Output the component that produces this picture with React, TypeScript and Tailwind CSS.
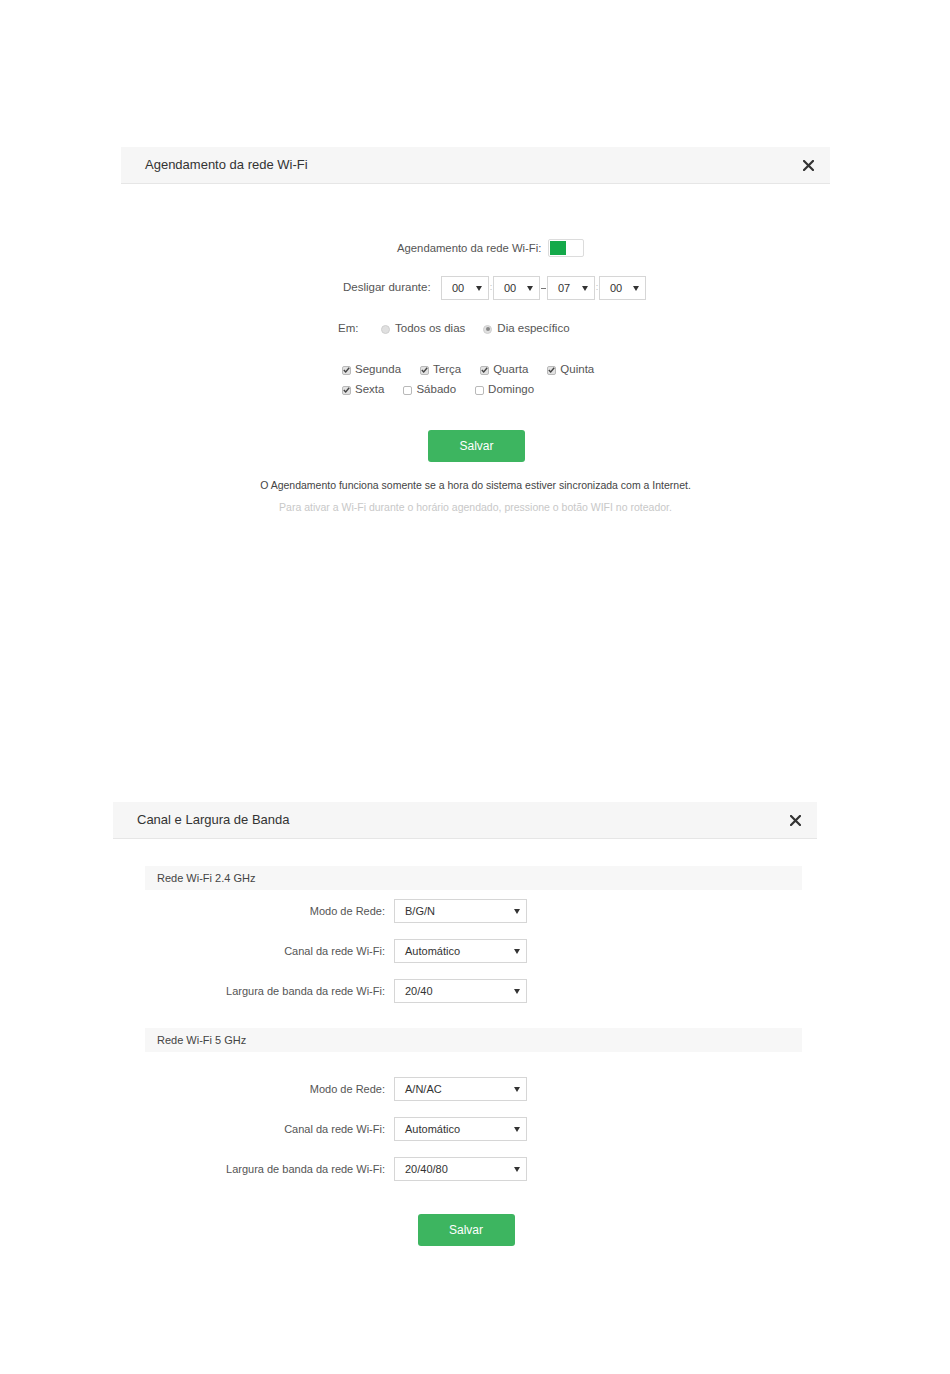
import React from 'react';

const font = 'font-["Liberation_Sans",Arial,sans-serif]';

const CloseIcon = () => (
    <svg width="11" height="11" viewBox="0 0 11 11" className="text-[#333]">
        <path d="M1 1 L10 10 M10 1 L1 10" stroke="currentColor" strokeWidth="2.2" strokeLinecap="square" />
    </svg>
);

const Caret = () => (
    <svg width="6" height="5" viewBox="0 0 6 5" className="text-[#333]">
        <path d="M0 0 L6 0 L3 5 Z" fill="currentColor" />
    </svg>
);

// Dialog title bar with the close cross on the right
const DialogHeader: React.FC<{ title: string }> = ({ title }) => (
    <div className="flex items-center justify-between h-[37px] bg-[#f6f6f6] border-b border-[#e6e6e6] pl-[24px] pr-[16px]">
        <span className="text-[13px] text-[#333]">{title}</span>
        <CloseIcon />
    </div>
);

const FakeSelect: React.FC<{ value: string; width: string }> = ({ value, width }) => (
    <div className={`flex items-center justify-between h-[24px] border border-[#d6d6d6] bg-white ${width} pl-[10px] pr-[6px]`}>
        <span className="text-[11px] text-[#333]">{value}</span>
        <Caret />
    </div>
);

const Radio: React.FC<{ checked?: boolean; label: string }> = ({ checked, label }) => (
    <div className="flex items-center">
        <span className="w-[9px] h-[9px] rounded-full bg-[#e0e0e0] border border-[#cfcfcf] flex items-center justify-center mr-[5px]">
            {checked && <span className="w-[4px] h-[4px] rounded-full bg-[#888]" />}
        </span>
        <span className="text-[11.5px] text-[#555]">{label}</span>
    </div>
);

const Check: React.FC<{ checked?: boolean; label: string }> = ({ checked, label }) => (
    <div className="flex items-center mr-[19px]">
        <span className={`w-[9px] h-[9px] rounded-[2px] border border-[#b9b9b9] flex items-center justify-center mr-[4px] ${checked ? 'bg-[#e2e2e2]' : 'bg-white'}`}>
            {checked && (
                <svg width="7" height="6" viewBox="0 0 7 6">
                    <path d="M0.8 3 L2.7 4.9 L6.2 0.8" stroke="#444" strokeWidth="1.4" fill="none" />
                </svg>
            )}
        </span>
        <span className="text-[11.5px] text-[#555]">{label}</span>
    </div>
);

const SaveButton = () => (
    <div className="w-[97px] h-[32px] rounded-[3px] bg-[#3db560] flex items-center justify-center text-white text-[12px]">
        Salvar
    </div>
);

const FormRow: React.FC<{ label: string; value: string }> = ({ label, value }) => (
    <div className="flex items-center h-[24px]">
        <span className="w-[249px] text-right text-[11px] text-[#555] pr-[9px]">{label}</span>
        <FakeSelect value={value} width="w-[133px]" />
    </div>
);

const SectionTitle: React.FC<{ title: string }> = ({ title }) => (
    <div className="h-[24px] bg-[#f7f7f7] flex items-center pl-[12px] mr-[15px] text-[11px] text-[#444]">{title}</div>
);

export default function App() {
    return (
        <div className={`w-[950px] h-[1374px] bg-white ${font}`}>
            {/* Wi-Fi schedule dialog */}
            <div className="h-[802px] pt-[147px]">
                <div className="ml-[121px] w-[709px]">
                    <DialogHeader title="Agendamento da rede Wi-Fi" />

                    <div className="pt-[55px] flex flex-col">
                        <div className="flex items-center pl-[276px] h-[18px]">
                            <span className="text-[11.3px] text-[#555] mr-[7px]">Agendamento da rede Wi-Fi:</span>
                            <div className="w-[36px] h-[18px] border border-[#dcdcdc] rounded-[2px] flex p-[1px]">
                                <div className="w-[16px] h-full bg-[#14a94a]" />
                            </div>
                        </div>

                        <div className="flex items-center pl-[222px] mt-[19px]">
                            <span className="w-[98px] text-[11.5px] text-[#555]">Desligar durante:</span>
                            <FakeSelect value="00" width="w-[48px]" />
                            <span className="w-[4px] text-center text-[9px] text-[#bbb]">:</span>
                            <FakeSelect value="00" width="w-[47px]" />
                            <span className="w-[7px] flex justify-center"><span className="w-[5px] h-[1px] bg-[#777]" /></span>
                            <FakeSelect value="07" width="w-[48px]" />
                            <span className="w-[4px] text-center text-[9px] text-[#bbb]">:</span>
                            <FakeSelect value="00" width="w-[47px]" />
                        </div>

                        <div className="flex items-center pl-[217px] mt-[21px] h-[16px]">
                            <span className="w-[43px] text-[11.5px] text-[#555]">Em:</span>
                            <Radio label="Todos os dias" />
                            <span className="w-[18px]" />
                            <Radio checked label="Dia específico" />
                        </div>

                        <div className="flex items-center pl-[221px] mt-[26px] h-[14px]">
                            <Check checked label="Segunda" />
                            <Check checked label="Terça" />
                            <Check checked label="Quarta" />
                            <Check checked label="Quinta" />
                        </div>
                        <div className="flex items-center pl-[221px] mt-[6px] h-[14px]">
                            <Check checked label="Sexta" />
                            <Check label="Sábado" />
                            <Check label="Domingo" />
                        </div>

                        <div className="flex justify-center mt-[33px] pl-[2px]">
                            <SaveButton />
                        </div>

                        <p className="text-center text-[10.5px] leading-[14px] text-[#444] mt-[16px]">
                            O Agendamento funciona somente se a hora do sistema estiver sincronizada com a Internet.
                        </p>
                        <p className="text-center text-[10.5px] leading-[14px] text-[#c8c8c8] mt-[8px]">
                            Para ativar a Wi-Fi durante o horário agendado, pressione o botão WIFI no roteador.
                        </p>
                    </div>
                </div>
            </div>

            {/* Channel and bandwidth dialog */}
            <div className="ml-[113px] w-[704px]">
                <DialogHeader title="Canal e Largura de Banda" />

                <div className="pl-[32px] pt-[27px]">
                    <SectionTitle title="Rede Wi-Fi 2.4 GHz" />
                    <div className="flex flex-col gap-[16px] mt-[9px]">
                        <FormRow label="Modo de Rede:" value="B/G/N" />
                        <FormRow label="Canal da rede Wi-Fi:" value="Automático" />
                        <FormRow label="Largura de banda da rede Wi-Fi:" value="20/40" />
                    </div>

                    <div className="mt-[25px]">
                        <SectionTitle title="Rede Wi-Fi 5 GHz" />
                    </div>
                    <div className="flex flex-col gap-[16px] mt-[25px]">
                        <FormRow label="Modo de Rede:" value="A/N/AC" />
                        <FormRow label="Canal da rede Wi-Fi:" value="Automático" />
                        <FormRow label="Largura de banda da rede Wi-Fi:" value="20/40/80" />
                    </div>
                </div>

                <div className="flex justify-center mt-[33px] pl-[2px]">
                    <SaveButton />
                </div>
            </div>
        </div>
    );
}
